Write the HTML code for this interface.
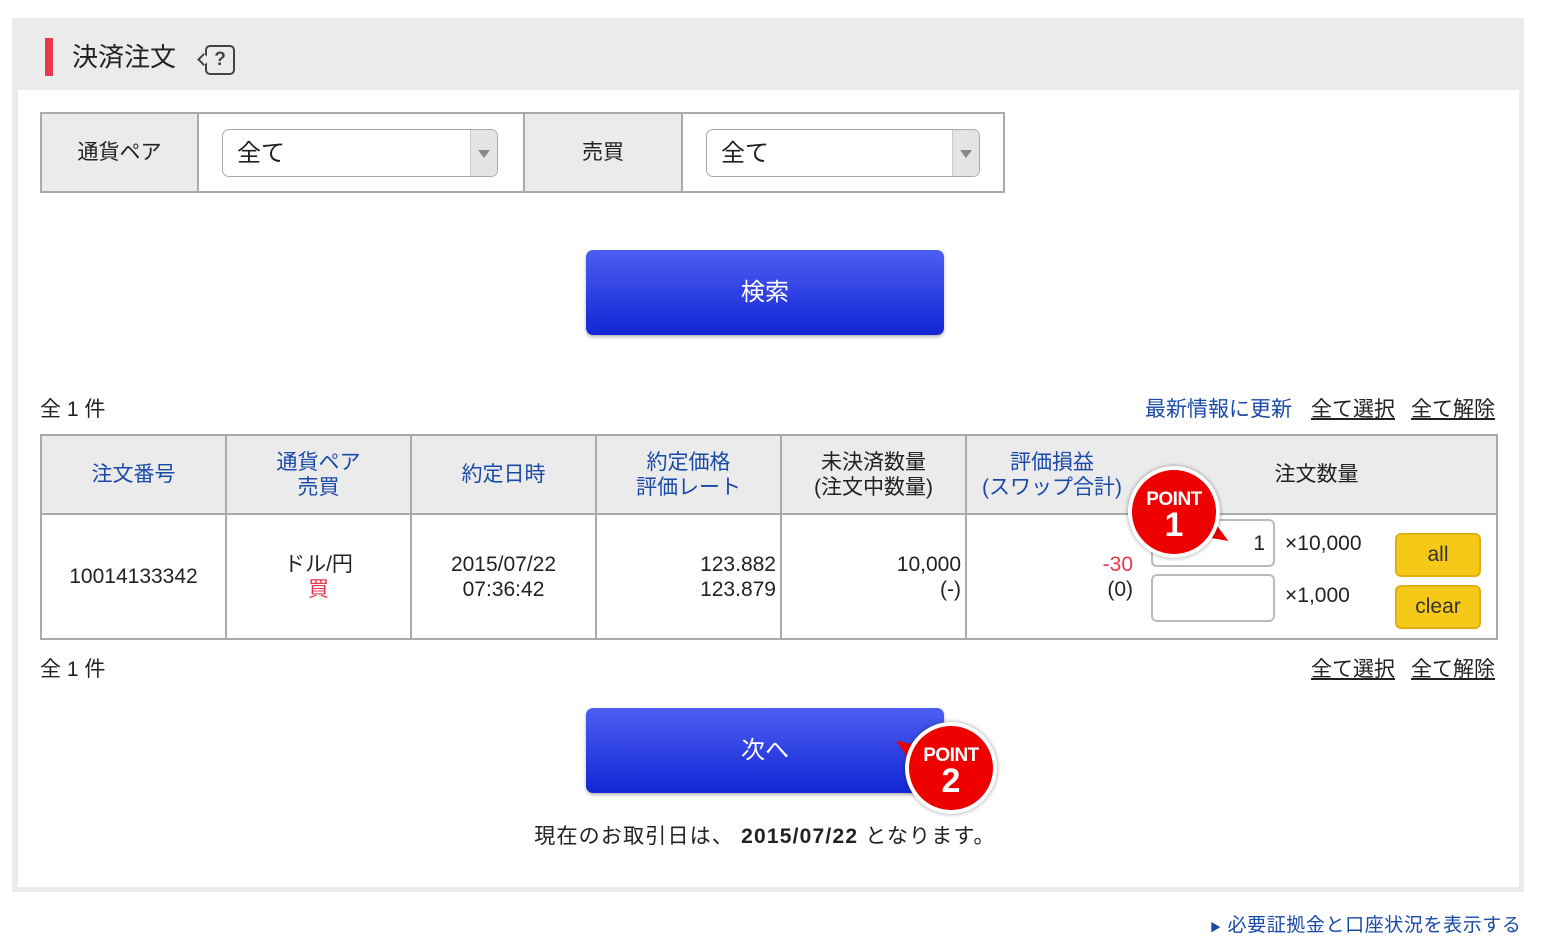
<!DOCTYPE html><html><head><meta charset="utf-8"><style>
body{margin:0;width:1546px;height:942px;background:#fff;font-family:"Liberation Sans","Noto Sans CJK JP",sans-serif;position:relative;overflow:hidden;color:#222}
.a{position:absolute}
.btn{position:absolute;left:586px;width:358px;height:85px;border-radius:7px;background:linear-gradient(#4d5ef2,#1226d4);color:#fff;font-size:24px;text-align:center;line-height:85px;box-shadow:0 2px 3px rgba(0,0,0,.3)}
.sel{position:absolute;height:48px;border:1px solid #aaa;border-radius:7px;background:#fff;font-size:24px;line-height:48px;padding-left:14px;box-sizing:border-box}
.sel:after{content:"";position:absolute;right:0;top:0;width:26px;height:46px;background:#e4e4e4;border-left:1px solid #ccc;border-radius:0 7px 7px 0}
.sel i{position:absolute;right:7px;top:20px;border:6px solid transparent;border-top:8px solid #888;z-index:2}
.lnk{color:#1a4aa8;text-decoration:underline;font-size:21px}
.point{position:absolute;width:84px;height:84px;border-radius:50%;background:#e00;border:4px solid #fff;box-shadow:0 0 4px rgba(0,0,0,.4);color:#fff;text-align:center;font-weight:bold}
.point b{display:block;font-size:19px;margin-top:20px;line-height:20px;letter-spacing:-0.5px}
.point span{display:block;font-size:34px;line-height:30px}
td,th{border:2px solid #aaa;padding:0;text-align:center;font-weight:normal}
</style></head><body>
<div class="a" style="left:12px;top:18px;width:1512px;height:874px;background:#ebebeb"></div>
<div class="a" style="left:18px;top:90px;width:1501px;height:797px;background:#fff"></div>
<div class="a" style="left:45px;top:38px;width:8px;height:38px;background:#e8384f"></div>
<div class="a" style="left:72px;top:38px;font-size:26px;line-height:38px;color:#222">決済注文</div>
<div class="a" style="left:205px;top:45px;width:26px;height:26px;border:2px solid #444;border-radius:5px;font-size:19px;text-align:center;line-height:26px;color:#444;font-weight:bold">?</div>
<div class="a" style="left:199px;top:55px;width:7px;height:7px;border-left:2px solid #444;border-bottom:2px solid #444;transform:rotate(45deg);background:#ebebeb"></div>

<div class="a" style="left:40px;top:112px;width:965px;height:81px;border:2px solid #aaa;box-sizing:border-box;background:#fff"></div>
<div class="a" style="left:42px;top:114px;width:155px;height:77px;background:#ebebeb;border-right:2px solid #aaa;font-size:21px;line-height:77px;text-align:center">通貨ペア</div>
<div class="a" style="left:523px;top:114px;width:156px;height:77px;background:#ebebeb;border-left:2px solid #aaa;border-right:2px solid #aaa;font-size:21px;line-height:77px;text-align:center">売買</div>
<div class="sel" style="left:222px;top:129px;width:276px">全て<i></i></div>
<div class="sel" style="left:706px;top:129px;width:274px">全て<i></i></div>

<div class="btn" style="top:250px">検索</div>

<div class="a" style="left:40px;top:393px;font-size:21px">全 1 件</div>
<div class="a" style="left:1145px;top:393px;color:#1a4aa8;font-size:21px">最新情報に更新</div>
<div class="a lnk" style="left:1311px;top:393px;color:#222">全て選択</div>
<div class="a lnk" style="left:1411px;top:393px;color:#222">全て解除</div>

<table class="a" style="left:40px;top:434px;width:1458px;border-collapse:collapse;font-size:21px;line-height:25px">
<tr style="height:79px;background:#ebebeb;color:#1a4aa8">
<th style="width:183px">注文番号</th><th style="width:183px">通貨ペア<br>売買</th><th style="width:183px">約定日時</th><th style="width:183px">約定価格<br>評価レート</th><th style="width:183px;color:#222">未決済数量<br>(注文中数量)</th><th style="width:170px;border-right:none">評価損益<br>(スワップ合計)</th><th style="border-left:none;color:#222">注文数量</th></tr>
<tr style="height:125px;background:#fff">
<td>10014133342</td><td>ドル/円<br><span style="color:#e8384f">買</span></td><td>2015/07/22<br>07:36:42</td><td style="text-align:right;padding-right:4px">123.882<br>123.879</td><td style="text-align:right;padding-right:4px">10,000<br>(-)</td><td style="text-align:right;border-right:none;padding-right:4px"><span style="color:#e8384f">-30</span><br>(0)</td><td style="border-left:none"></td></tr>
</table>
<div class="a" style="left:1151px;top:519px;width:124px;height:48px;border:2px solid #bbb;border-radius:6px;box-sizing:border-box;font-size:21px;text-align:right;padding-right:8px;line-height:46px;background:#fff">1</div>
<div class="a" style="left:1151px;top:574px;width:124px;height:48px;border:2px solid #bbb;border-radius:6px;box-sizing:border-box;background:#fff"></div>
<div class="a" style="left:1285px;top:532px;font-size:21px">×10,000</div>
<div class="a" style="left:1285px;top:584px;font-size:21px">×1,000</div>
<div class="a" style="left:1395px;top:533px;width:86px;height:44px;background:#f6c919;border:2px solid #e0b010;border-radius:6px;box-sizing:border-box;font-size:21px;text-align:center;line-height:40px;color:#333">all</div>
<div class="a" style="left:1395px;top:585px;width:86px;height:44px;background:#f6c919;border:2px solid #e0b010;border-radius:6px;box-sizing:border-box;font-size:21px;text-align:center;line-height:40px;color:#333">clear</div>
<div class="a" style="left:1200px;top:522px;width:0;height:0;border-left:30px solid #e00;border-top:10px solid transparent;border-bottom:14px solid transparent;transform:rotate(35deg)"></div>
<div class="point" style="left:1128px;top:466px"><b>POINT</b><span>1</span></div>

<div class="a" style="left:40px;top:653px;font-size:21px">全 1 件</div>
<div class="a lnk" style="left:1311px;top:653px;color:#222">全て選択</div>
<div class="a lnk" style="left:1411px;top:653px;color:#222">全て解除</div>

<div class="btn" style="top:708px">次へ</div>
<div class="a" style="left:893px;top:738px;width:0;height:0;border-right:30px solid #e00;border-top:10px solid transparent;border-bottom:14px solid transparent;transform:rotate(30deg)"></div>
<div class="point" style="left:905px;top:722px"><b>POINT</b><span>2</span></div>

<div class="a" style="left:0;width:1530px;top:820px;text-align:center;font-size:21px;letter-spacing:1.2px">現在のお取引日は、 <b>2015/07/22</b> となります。</div>
<div class="a" style="left:1210px;top:910px;font-size:19px;color:#1a4aa8;letter-spacing:0.6px"><span style="font-size:11px">▶</span> 必要証拠金と口座状況を表示する</div>
</body></html>
